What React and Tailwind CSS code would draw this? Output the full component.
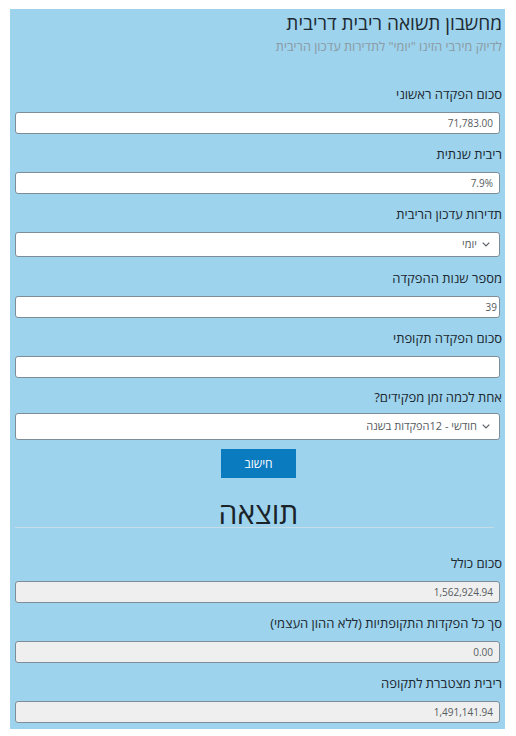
import React from "react";

const labelCls = "block h-[18px] leading-[18px] text-[13px] font-medium text-[#1c2831]";
const boxCls =
    "block h-[22px] w-full rounded-[3px] border border-[#7d8e99] px-[6px] text-right text-[10px] leading-[20px] text-[#555b60]";

function Chevron() {
    return (
        <svg width="8" height="5" viewBox="0 0 8 5" className="shrink-0">
            <polyline points="0.7,0.7 4,4 7.3,0.7" fill="none" stroke="#5a6066" strokeWidth="1.2" />
        </svg>
    );
}

function Field({ label, value, tight, className = "" }) {
    return (
        <div className={className}>
            <label className={labelCls}>{label}</label>
            <div className="mt-[9px] mr-[2px]">
                <input
                    readOnly
                    value={value}
                    dir="ltr"
                    className={`${boxCls} bg-white outline-none ${tight ? "pr-[2px]" : ""}`}
                />
            </div>
        </div>
    );
}

function SelectField({ label, value, tall, className = "" }) {
    return (
        <div className={className}>
            <label className={labelCls}>{label}</label>
            <div
                className={`mr-[2px] flex items-center gap-[5px] rounded-[3px] border border-[#7d8e99] bg-white pr-[9px] text-[11px] text-[#555b60] ${
                    tall ? "mt-[7px] h-[27px]" : "mt-[9px] h-[25px]"
                }`}
            >
                <Chevron />
                <span>{value}</span>
            </div>
        </div>
    );
}

function Output({ label, value, className = "" }) {
    return (
        <div className={className}>
            <label className={labelCls}>{label}</label>
            <div className="mt-[9px] mr-[2px]">
                <div className={`${boxCls} bg-[#efefef]`}>{value}</div>
            </div>
        </div>
    );
}

export default function App() {
    return (
        <div className="min-h-screen bg-white pt-[9px] pl-[10px] font-['Open_Sans','DejaVu_Sans',sans-serif]">
            <div dir="rtl" className="w-[495px] bg-[#9dd3ec] pt-[2px] pr-[3px] pl-[5px] pb-[6px]">
                <h1 className="h-[24px] leading-[24px] text-[19px] font-medium text-[#1d2a33]">
                    מחשבון תשואה ריבית דריבית
                </h1>
                <p className="mt-[2px] h-[18px] leading-[18px] text-[12.7px] text-[#8b9aa4]">
                    לדיוק מירבי הזינו "יומי" לתדירות עדכון הריבית
                </p>

                <Field className="mt-[30px]" label="סכום הפקדה ראשוני" value="71,783.00" />
                <Field className="mt-[11px]" label="ריבית שנתית" value="7.9%" />
                <SelectField className="mt-[11px]" label="תדירות עדכון הריבית" value="יומי" />
                <Field className="mt-[12px]" tight label="מספר שנות ההפקדה" value="39" />
                <Field className="mt-[11px]" label="סכום הפקדה תקופתי" value="" />
                <SelectField className="mt-[10px]" tall label="אחת לכמה זמן מפקידים?" value="חודשי - 12הפקדות בשנה" />

                <button className="mx-auto mt-[9px] block h-[29px] w-[75px] bg-[#0b7bbf] text-[12px] font-medium text-white">
                    חישוב
                </button>

                <h2 className="mt-[15px] h-[40px] text-center text-[30px] leading-[40px] font-medium text-[#1a232a]">
                    תוצאה
                </h2>
                <div className="-mt-[6px] mr-[8px] h-px bg-[#c6dce7]" />

                <Output className="mt-[26px]" label="סכום כולל" value="1,562,924.94" />
                <Output className="mt-[11px]" label="סך כל הפקדות התקופתיות (ללא ההון העצמי)" value="0.00" />
                <Output className="mt-[11px]" label="ריבית מצטברת לתקופה" value="1,491,141.94" />
            </div>
        </div>
    );
}
